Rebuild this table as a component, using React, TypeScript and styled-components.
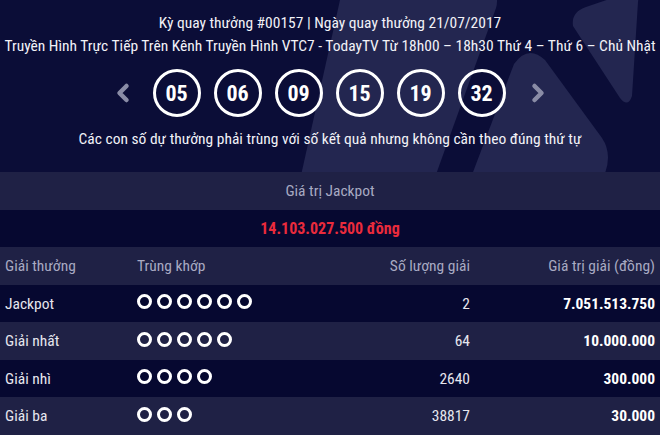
import React from "react";
import styled, { createGlobalStyle } from "styled-components";

const GlobalStyle = createGlobalStyle`
  html, body { margin: 0; padding: 0; background: #070a30; }
  body { font-family: "Roboto Condensed", "Liberation Sans Narrow", Roboto, "Noto Sans", sans-serif; }
  * { box-sizing: border-box; }
`;

const Page = styled.div`
  width: 660px;
  height: 435px;
  display: flex;
  flex-direction: column;
  overflow: hidden;
  background: #070a30;
`;

const Hero = styled.section`
  position: relative;
  height: 172px;
  flex: none;
  background: #0b0d37;
  overflow: hidden;
  display: flex;
  flex-direction: column;
  align-items: center;
  padding-top: 12px;
  color: #f2f2f7;
`;

const Backdrop = styled.svg`
  position: absolute;
  inset: 0;
  width: 660px;
  height: 172px;
  pointer-events: none;
`;

const HeroLine = styled.div<{ $mt?: number }>`
  position: relative;
  height: 23px;
  line-height: 23px;
  font-size: 15.5px;
  white-space: nowrap;
  margin-top: ${(p) => p.$mt ?? 0}px;
`;

const BallRow = styled.div`
  position: relative;
  display: flex;
  align-items: center;
  gap: 13px;
  margin-top: 11px;
`;

const Arrow = styled.svg<{ $side: "l" | "r" }>`
  width: 14px;
  height: 22px;
  flex: none;
  margin: ${(p) => (p.$side === "l" ? "0 10px 0 0" : "0 0 0 12px")};
`;

const Ball = styled.div`
  width: 48px;
  height: 48px;
  border: 3px solid #ffffff;
  border-radius: 50%;
  display: flex;
  align-items: center;
  justify-content: center;
  font-size: 22px;
  font-weight: 700;
  color: #ffffff;
`;

const Table = styled.div`
  flex: 1;
  display: flex;
  flex-direction: column;
`;

const Band = styled.div<{ $tone: "light" | "dark" }>`
  flex: 1;
  display: flex;
  align-items: center;
  justify-content: center;
  background: ${(p) => (p.$tone === "light" ? "#1f2145" : "#060830")};
  font-size: 15.5px;
`;

const BandLabel = styled.span`
  color: #a8aac2;
`;

const JackpotValue = styled.span`
  color: #ea2b3c;
  font-weight: 700;
  font-size: 16px;
`;

const Row = styled.div<{ $tone: "light" | "dark" }>`
  flex: 1;
  display: grid;
  grid-template-columns: 132px 193px 140px 185px;
  align-items: center;
  padding: 0 5px;
  background: ${(p) => (p.$tone === "light" ? "#1f2145" : "#060830")};
  font-size: 15.5px;
`;

const HeadCell = styled.div<{ $right?: boolean }>`
  color: #a8aac2;
  text-align: ${(p) => (p.$right ? "right" : "left")};
`;

const Cell = styled.div<{ $right?: boolean; $bold?: boolean }>`
  text-align: ${(p) => (p.$right ? "right" : "left")};
  font-weight: ${(p) => (p.$bold ? 700 : 400)};
  color: ${(p) => (p.$bold ? "#ffffff" : "#e6e6ee")};
`;

const Dots = styled.div`
  display: flex;
  gap: 5px;
  margin-top: -4px;
`;

const Dot = styled.span`
  width: 15px;
  height: 15px;
  border: 3px solid #ffffff;
  border-radius: 50%;
`;

const numbers = ["05", "06", "09", "15", "19", "32"];

const prizes = [
  { name: "Jackpot", match: 6, count: "2", value: "7.051.513.750" },
  { name: "Giải nhất", match: 5, count: "64", value: "10.000.000" },
  { name: "Giải nhì", match: 4, count: "2640", value: "300.000" },
  { name: "Giải ba", match: 3, count: "38817", value: "30.000" },
];

export default function App() {
  return (
    <>
      <GlobalStyle />
      <Page>
        <Hero>
          <Backdrop viewBox="0 0 660 172">
            <g fill="#232650">
              <path d="M352 -10 L488 -10 Q500 -6 496 8 L434 180 L300 180 L340 0 Q343 -10 352 -10 Z" />
              <path d="M514 64 Q528 44 545 60 L602 138 Q614 156 602 180 L470 180 Z" />
              <path d="M573 26 Q571 12 586 7 L630 -8 Q640 -10 638 2 L632 96 Q628 108 620 98 Z" />
            </g>
          </Backdrop>
          <HeroLine>Kỳ quay thưởng #00157 | Ngày quay thưởng 21/07/2017</HeroLine>
          <HeroLine>
            Truyền Hình Trực Tiếp Trên Kênh Truyền Hình VTC7 - TodayTV Từ 18h00 – 18h30 Thứ 4 – Thứ 6 – Chủ Nhật
          </HeroLine>
          <BallRow>
            <Arrow $side="l" viewBox="0 0 14 22">
              <polyline points="10.5,4 3.5,11 10.5,18" fill="none" stroke="#8a8ca6" strokeWidth="4.5" strokeLinecap="round" strokeLinejoin="round" />
            </Arrow>
            {numbers.map((n) => (
              <Ball key={n}>{n}</Ball>
            ))}
            <Arrow $side="r" viewBox="0 0 14 22">
              <polyline points="3.5,4 10.5,11 3.5,18" fill="none" stroke="#8a8ca6" strokeWidth="4.5" strokeLinecap="round" strokeLinejoin="round" />
            </Arrow>
          </BallRow>
          <HeroLine $mt={11}>Các con số dự thưởng phải trùng với số kết quả nhưng không cần theo đúng thứ tự</HeroLine>
        </Hero>
        <Table>
          <Band $tone="light">
            <BandLabel>Giá trị Jackpot</BandLabel>
          </Band>
          <Band $tone="dark">
            <JackpotValue>14.103.027.500 đồng</JackpotValue>
          </Band>
          <Row $tone="light">
            <HeadCell>Giải thưởng</HeadCell>
            <HeadCell>Trùng khớp</HeadCell>
            <HeadCell $right>Số lượng giải</HeadCell>
            <HeadCell $right>Giá trị giải (đồng)</HeadCell>
          </Row>
          {prizes.map((p, i) => (
            <Row key={p.name} $tone={i % 2 === 0 ? "dark" : "light"}>
              <Cell>{p.name}</Cell>
              <Dots>
                {Array.from({ length: p.match }).map((_, k) => (
                  <Dot key={k} />
                ))}
              </Dots>
              <Cell $right>{p.count}</Cell>
              <Cell $right $bold>{p.value}</Cell>
            </Row>
          ))}
        </Table>
      </Page>
    </>
  );
}
